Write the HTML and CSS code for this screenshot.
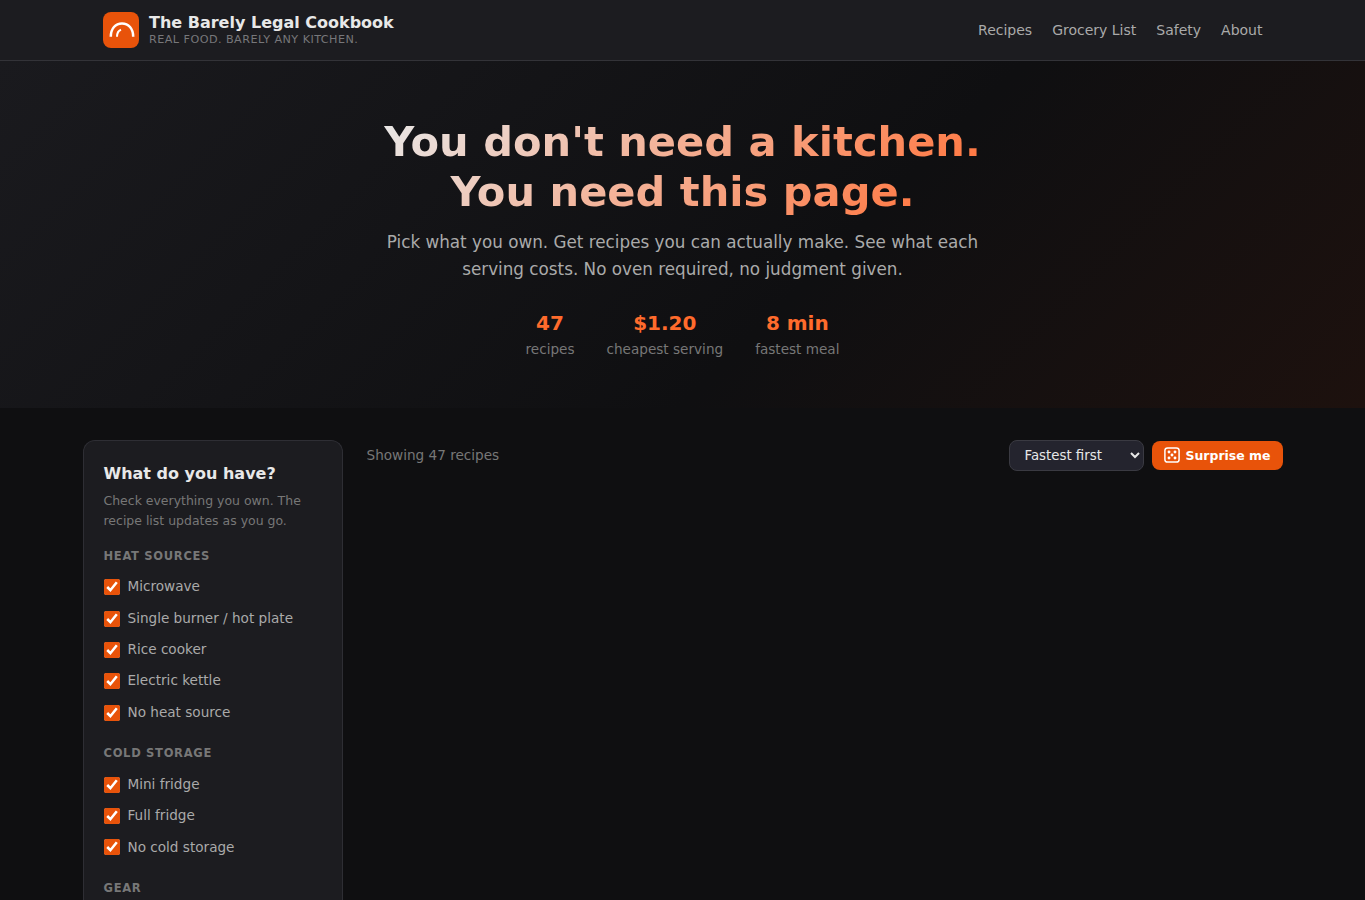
FILE: index.html
```html
<!DOCTYPE html>
<html lang="en">
<head>
<meta charset="utf-8">
<title>The Barely Legal Cookbook</title>
<link rel="stylesheet" href="styles.css">
</head>
<body>
<header class="site-header">
  <div class="header-inner">
    <a class="brand" href="#">
      <svg class="logo" viewBox="0 0 36 36" width="36" height="36" fill="none" stroke="#fff">
        <rect width="36" height="36" rx="8" fill="#e8530a" stroke="none"/>
        <path d="M7.800 24.800C7.800 16.500 12.500 11.400 19 11.400S30.200 16.500 30.200 24.800" stroke-width="2.500"/>
        <path d="M14 24.800C14 21.500 15.300 18.800 18 17.800" stroke-width="2"/>
      </svg>
      <span class="brand-text">
        <span class="brand-name">The Barely Legal Cookbook</span>
        <span class="brand-tag">Real food. Barely any kitchen.</span>
      </span>
    </a>
    <nav class="nav">
      <a href="#">Recipes</a><a href="#">Grocery List</a><a href="#">Safety</a><a href="#">About</a>
    </nav>
  </div>
</header>
<section class="hero">
  <h1>You don't need a kitchen.<br>You need this page.</h1>
  <p>Pick what you own. Get recipes you can actually make. See what each serving costs. No oven required, no judgment given.</p>
  <div class="stats">
    <div class="stat"><strong>47</strong><span>recipes</span></div>
    <div class="stat"><strong>$1.20</strong><span>cheapest serving</span></div>
    <div class="stat"><strong>8 min</strong><span>fastest meal</span></div>
  </div>
</section>
<main class="layout">
  <aside class="sidebar">
    <h2>What do you have?</h2>
    <p class="hint">Check everything you own. The recipe list updates as you go.</p>
    <section class="group">
      <h3>Heat sources</h3>
      <label><input type="checkbox" checked><span>Microwave</span></label>
      <label><input type="checkbox" checked><span>Single burner / hot plate</span></label>
      <label><input type="checkbox" checked><span>Rice cooker</span></label>
      <label><input type="checkbox" checked><span>Electric kettle</span></label>
      <label><input type="checkbox" checked><span>No heat source</span></label>
    </section>
    <section class="group">
      <h3>Cold storage</h3>
      <label><input type="checkbox" checked><span>Mini fridge</span></label>
      <label><input type="checkbox" checked><span>Full fridge</span></label>
      <label><input type="checkbox" checked><span>No cold storage</span></label>
    </section>
    <section class="group">
      <h3>Gear</h3>
    </section>
  </aside>
  <section class="results">
    <div class="toolbar">
      <span class="count">Showing 47 recipes</span>
      <div class="controls">
        <select class="sort"><option>Fastest first</option></select>
        <button class="surprise" type="button">
          <svg class="dice" viewBox="0 0 16 16" width="16" height="16" fill="none" stroke="#fff" stroke-width="1.500">
            <rect x="0.900" y="0.900" width="14.200" height="14.200" rx="2.700"/>
            <g fill="#fff" stroke="none"><circle cx="5" cy="5" r="1.450"/><circle cx="11" cy="5" r="1.450"/><circle cx="8" cy="8" r="1.450"/><circle cx="5" cy="11" r="1.450"/><circle cx="11" cy="11" r="1.450"/></g>
          </svg>
          Surprise me
        </button>
      </div>
    </div>
  </section>
</main>
</body>
</html>
```
FILE: styles.css
```css
* { box-sizing: border-box; margin: 0; padding: 0; }
html { height: 100%; overflow: hidden; }
body {
  height: 100%;
  overflow: hidden;
  background: #0f0f11;
  color: #e8e8e8;
  font-family: "DejaVu Sans", sans-serif;
  font-size: 16px;
  line-height: 1.6;
}
a { color: inherit; text-decoration: none; }
.site-header { background: #1c1c20; border-bottom: 1px solid #333338; }
.header-inner {
  max-width: 1200px;
  height: 60px;
  margin: 0 auto;
  padding: 0 20px;
  display: flex;
  align-items: center;
  justify-content: space-between;
}
.brand { display: flex; align-items: center; gap: 10.5px; }
.logo { display: block; }
.brand-text { display: flex; flex-direction: column; }
.brand-name { font-size: 16px; font-weight: 700; line-height: 19px; }
.brand-tag {
  font-size: 11.2px;
  line-height: 15px;
  letter-spacing: 0.448px;
  text-transform: uppercase;
  color: #77777a;
}
.nav { display: flex; gap: 20px; font-size: 14px; color: #aaa; }
.hero {
  height: 347px;
  padding: 56px 20px 48px;
  text-align: center;
  background: linear-gradient(135deg, #1a1a1e 0%, #0f0f11 60%, #1d110e 100%);
}
.hero h1 {
  width: fit-content;
  margin: 0 auto 12px;
  font-size: 41.6px;
  font-weight: 700;
  line-height: 1.2;
  background: linear-gradient(135deg, #e8e8e8 0%, #ff7a45 90%);
  -webkit-background-clip: text;
  background-clip: text;
  color: transparent;
}
.hero p { max-width: 600px; margin: 0 auto 24px; font-size: 16.8px; color: #aaa; }
.stats { display: flex; justify-content: center; gap: 32px; }
.stat { display: flex; flex-direction: column; }
.stat strong { font-size: 20px; color: #ff6b2c; }
.stat span { font-size: 13.6px; color: #777; }
.layout {
  max-width: 1200px;
  margin: 32px auto 0;
  display: grid;
  grid-template-columns: 260px 1fr;
  gap: 24px;
}
.sidebar {
  height: 460px;
  overflow: hidden;
  padding: 20px 20px 0;
  background: #1c1c20;
  border: 1px solid #2e2e34;
  border-bottom: 0;
  border-radius: 12px 12px 0 0;
}
.sidebar h2 { font-size: 16px; margin-bottom: 4px; }
.hint { font-size: 12.48px; color: #777; margin-bottom: 16.25px; }
.group { margin-bottom: 16px; }
.group h3 {
  margin-bottom: 6.4px;
  font-size: 11.52px;
  letter-spacing: 0.69px;
  text-transform: uppercase;
  color: #777;
}
.group:last-child, .group:last-child h3 { margin-bottom: 0; }
.group label {
  display: flex;
  align-items: center;
  gap: 8px;
  padding: 4.8px 0;
  font-size: 13.6px;
  color: #aaa;
}
.group input { width: 16px; height: 16px; accent-color: #e8530a; }
.toolbar { display: flex; justify-content: space-between; align-items: center; }
.count { font-size: 13.6px; color: #777; }
.controls { display: flex; align-items: center; gap: 8px; }
.sort {
  width: 135px;
  height: 31px;
  padding: 0 10px 1px;
  font: 13.33px "DejaVu Sans", sans-serif;
  color: #e8e8e8;
  color-scheme: dark;
  background: #24242e;
  border: 1px solid #3a3a42;
  border-radius: 8px;
}
.surprise {
  height: 29px;
  padding: 0 12px;
  display: flex;
  align-items: center;
  gap: 5px;
  font: 700 12.48px "DejaVu Sans", sans-serif;
  color: #fff;
  background: #e8530a;
  border: 0;
  border-radius: 8px;
}
.dice { margin-bottom: 1px; }
```
